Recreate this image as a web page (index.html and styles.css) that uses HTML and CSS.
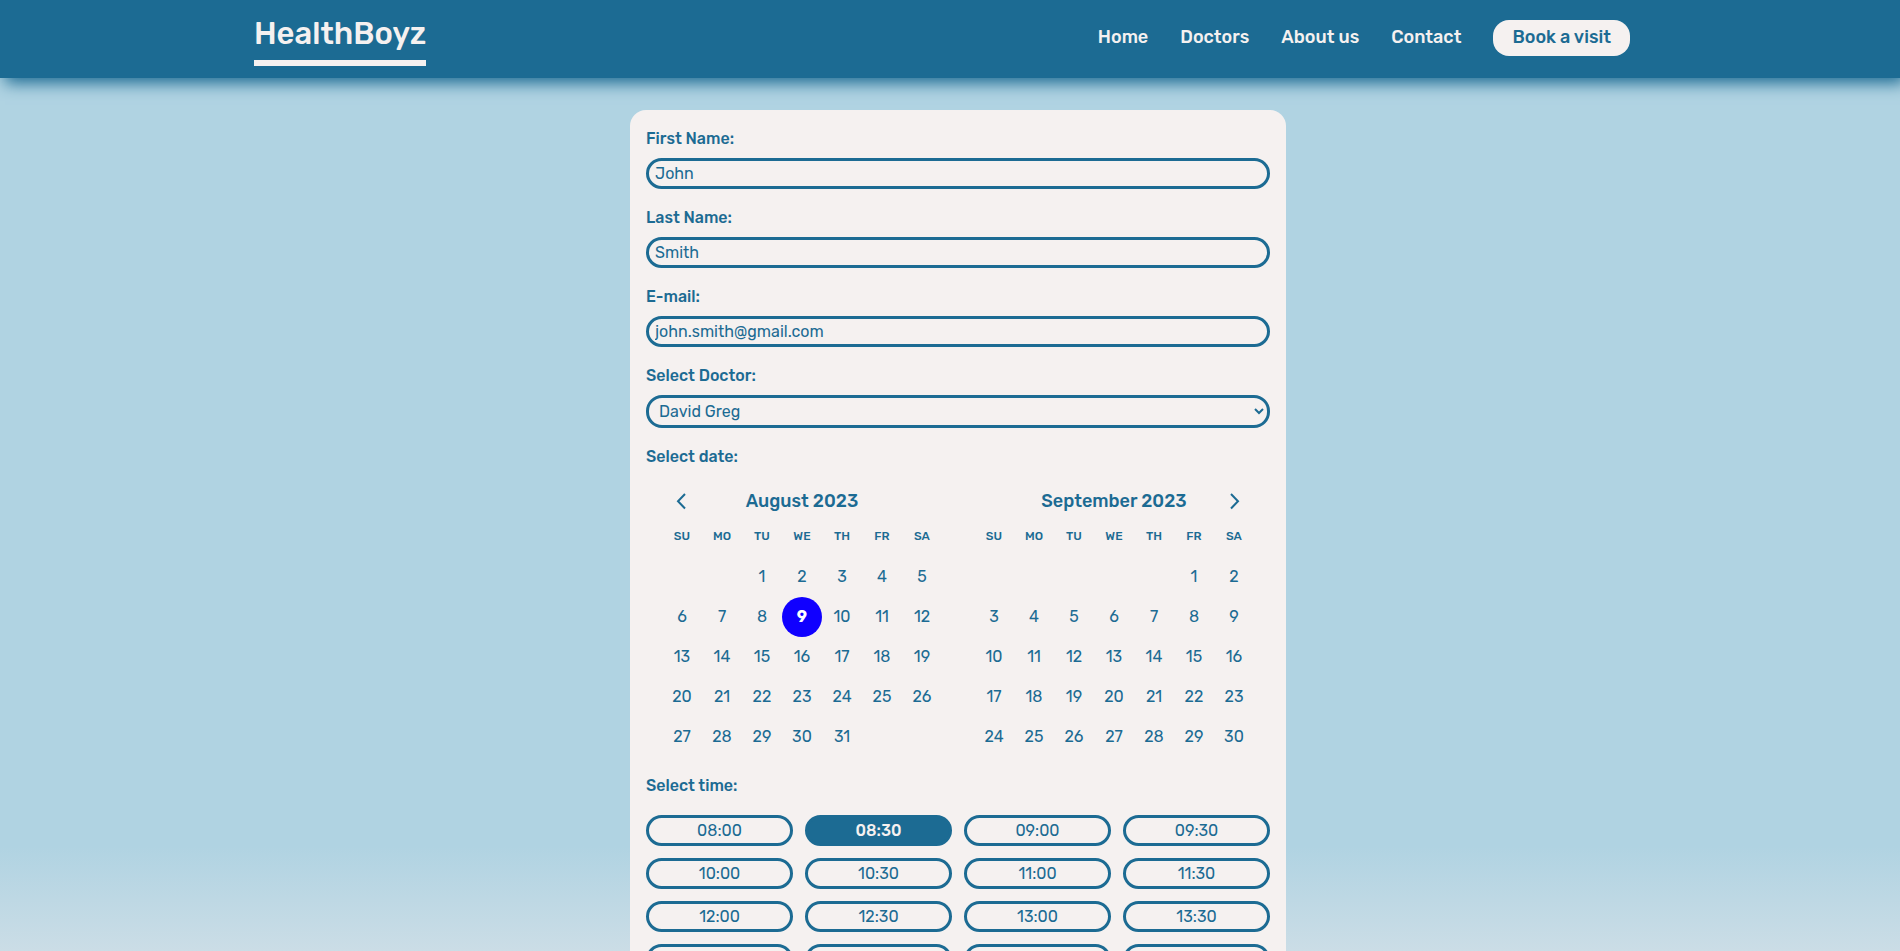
FILE: index.html
```html
<!DOCTYPE html>
<html lang="en">
<head>
<meta charset="utf-8">
<title>HealthBoyz – Book a visit</title>
<link rel="stylesheet" href="styles.css">
</head>
<body>
<header class="header">
  <div class="header-inner">
    <a class="logo" href="#">HealthBoyz</a>
    <nav class="nav">
      <a class="nav-link" href="#">Home</a>
      <a class="nav-link" href="#">Doctors</a>
      <a class="nav-link" href="#">About us</a>
      <a class="nav-link" href="#">Contact</a>
      <a class="nav-cta" href="#">Book a visit</a>
    </nav>
  </div>
</header>
<main class="main">
  <form class="card">
    <div class="field"><label class="label" for="first">First Name:</label><input class="control" id="first" type="text" value="John"></div>
    <div class="field"><label class="label" for="last">Last Name:</label><input class="control" id="last" type="text" value="Smith"></div>
    <div class="field"><label class="label" for="email">E-mail:</label><input class="control" id="email" type="email" value="john.smith@gmail.com"></div>
    <div class="field"><label class="label" for="doctor">Select Doctor:</label><select class="control" id="doctor"><option>David Greg</option></select></div>
    <div class="group">
    <div class="label">Select date:</div>
    <div class="calendar">
      <section class="month">
        <div class="month-head">
          <button class="arrow arrow-prev" type="button" aria-label="Previous month"><svg viewBox="0 0 24 24" width="24" height="24"><path d="M15 5 8 12.2l7 7.3"/></svg></button>
          <h2 class="month-title">August 2023</h2>
        </div>
        <table class="days">
          <thead><tr><th>SU</th><th>MO</th><th>TU</th><th>WE</th><th>TH</th><th>FR</th><th>SA</th></tr></thead>
          <tbody>
            <tr><td></td><td></td><td>1</td><td>2</td><td>3</td><td>4</td><td>5</td></tr>
            <tr><td>6</td><td>7</td><td>8</td><td class="selected">9</td><td>10</td><td>11</td><td>12</td></tr>
            <tr><td>13</td><td>14</td><td>15</td><td>16</td><td>17</td><td>18</td><td>19</td></tr>
            <tr><td>20</td><td>21</td><td>22</td><td>23</td><td>24</td><td>25</td><td>26</td></tr>
            <tr><td>27</td><td>28</td><td>29</td><td>30</td><td>31</td><td></td><td></td></tr>
          </tbody>
        </table>
      </section>
      <section class="month">
        <div class="month-head">
          <h2 class="month-title">September 2023</h2>
          <button class="arrow arrow-next" type="button" aria-label="Next month"><svg viewBox="0 0 24 24" width="24" height="24"><path d="m9 5 7 7.2-7 7.3"/></svg></button>
        </div>
        <table class="days">
          <thead><tr><th>SU</th><th>MO</th><th>TU</th><th>WE</th><th>TH</th><th>FR</th><th>SA</th></tr></thead>
          <tbody>
            <tr><td></td><td></td><td></td><td></td><td></td><td>1</td><td>2</td></tr>
            <tr><td>3</td><td>4</td><td>5</td><td>6</td><td>7</td><td>8</td><td>9</td></tr>
            <tr><td>10</td><td>11</td><td>12</td><td>13</td><td>14</td><td>15</td><td>16</td></tr>
            <tr><td>17</td><td>18</td><td>19</td><td>20</td><td>21</td><td>22</td><td>23</td></tr>
            <tr><td>24</td><td>25</td><td>26</td><td>27</td><td>28</td><td>29</td><td>30</td></tr>
          </tbody>
        </table>
      </section>
    </div>
    </div>
    <div class="label">Select time:</div>
    <div class="times">
      <button class="time" type="button">08:00</button><button class="time time-active" type="button">08:30</button><button class="time" type="button">09:00</button><button class="time" type="button">09:30</button>
      <button class="time" type="button">10:00</button><button class="time" type="button">10:30</button><button class="time" type="button">11:00</button><button class="time" type="button">11:30</button>
      <button class="time" type="button">12:00</button><button class="time" type="button">12:30</button><button class="time" type="button">13:00</button><button class="time" type="button">13:30</button>
      <button class="time" type="button" aria-label="14:00"></button><button class="time" type="button" aria-label="14:30"></button><button class="time" type="button" aria-label="15:00"></button><button class="time" type="button" aria-label="15:30"></button>
    </div>
  </form>
</main>
</body>
</html>
```
FILE: styles.css
```css
:root {
  --blue: #1c6b93;
  --paper: #f5f1f0;
}
* { box-sizing: border-box; }
body {
  margin: 0;
  height: 100vh;
  overflow: hidden;
  font: 400 16px/24px Rubik, Roboto, sans-serif;
  color: var(--blue);
  background: linear-gradient(#b0d3e2 0, #b0d3e2 89%, #cbdde6 100%);
}
.header {
  position: relative;
  padding: 12px 16px 12px 0;
  background: var(--blue);
  box-shadow: 5px 5px 15px var(--blue);
}
.header-inner {
  display: flex;
  justify-content: space-between;
  align-items: flex-start;
  max-width: 1376px;
  margin: 0 auto;
}
.logo {
  padding-bottom: 4px;
  border-bottom: 6px solid var(--paper);
  color: var(--paper);
  font-size: 31px;
  font-weight: 500;
  line-height: 44px;
  text-decoration: none;
}
.nav {
  display: flex;
  align-items: flex-start;
  gap: 32px;
  padding-top: 8px;
  font-size: 18px;
  line-height: 34px;
}
.nav-link, .nav-cta {
  color: var(--paper);
  font-weight: 500;
  text-decoration: none;
}
.nav-cta {
  padding: 0 19px 2px;
  border-radius: 16px;
  background: var(--paper);
  color: var(--blue);
}
.main { padding: 32px 0 0 16px; }
.card {
  display: flex;
  flex-direction: column;
  gap: 16px;
  max-width: 656px;
  margin: 0 auto;
  padding: 16px;
  border-radius: 16px;
  background: var(--paper);
}
.field {
  display: flex;
  flex-direction: column;
  gap: 6px;
}
.group {
  display: flex;
  flex-direction: column;
  gap: 14px;
}
.label {
  font-weight: 500;
  line-height: 26px;
}
.control {
  width: 100%;
  padding: 3px 6px;
  border: 3px solid var(--blue);
  border-radius: 16px;
  background: transparent;
  color: var(--blue);
  font: inherit;
  line-height: 19px;
}
.calendar {
  display: grid;
  grid-template-columns: 1fr 1fr;
  gap: 32px;
  padding: 0 16px;
}
.month-head {
  display: grid;
  grid-template-columns: 40px 1fr 40px;
  align-items: center;
  height: 33px;
}
.month-title {
  grid-column: 2;
  grid-row: 1;
  margin: 0;
  font-size: 18px;
  font-weight: 500;
  text-align: center;
}
.arrow {
  display: flex;
  grid-row: 1;
  justify-content: center;
  padding: 0;
  border: 0;
  background: none;
  color: inherit;
}
.arrow-prev { grid-column: 1; }
.arrow-next { grid-column: 3; }
.arrow path {
  fill: none;
  stroke: currentColor;
  stroke-width: 2;
}
.days {
  width: 100%;
  border-collapse: collapse;
  table-layout: fixed;
  text-align: center;
}
.days th, .days td { height: 40px; padding: 0; }
.days th { padding-bottom: 2px; font-size: 12px; font-weight: 500; }
.days .selected {
  border-radius: 50%;
  background: #1000ff;
  color: #fff;
  font-weight: 700;
}
.times {
  display: grid;
  grid-template-columns: repeat(4, 1fr);
  gap: 12px;
}
.time {
  min-height: 31px;
  padding: 3px;
  border: 3px solid var(--blue);
  border-radius: 16px;
  background: transparent;
  color: var(--blue);
  font: inherit;
  line-height: 19px;
}
.time-active {
  background: var(--blue);
  color: var(--paper);
  font-weight: 500;
}
```
